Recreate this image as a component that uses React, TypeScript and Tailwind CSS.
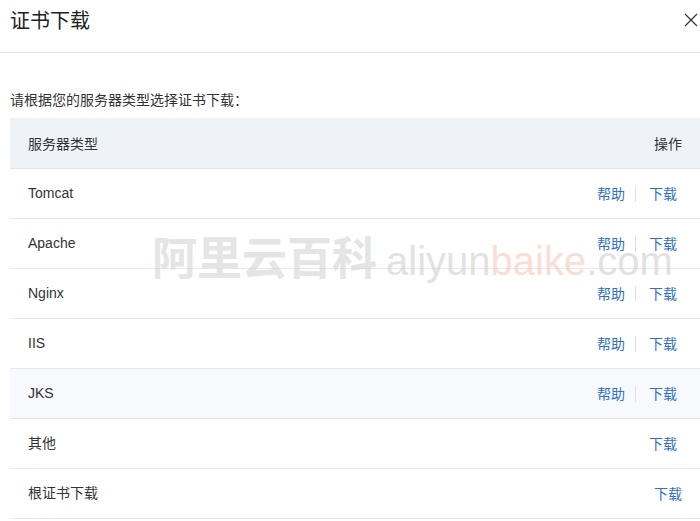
import React from 'react';

const rows = [
  { name: 'Tomcat', help: true },
  { name: 'Apache', help: true },
  { name: 'Nginx', help: true },
  { name: 'IIS', help: true },
  { name: 'JKS', help: true, hover: true },
  { name: '其他', help: false },
  { name: '根证书下载', help: false, last: true },
];

const App: React.FC = () => {
  return (
    <div
      className="relative w-[700px] h-[521px] overflow-hidden bg-white text-[#333]"
      style={{ fontFamily: '"Noto Sans CJK SC", "Liberation Sans", sans-serif' }}
    >
      {/* 标题 */}
      <div className="flex justify-between h-[53px] pt-[6px] pl-[10px] pr-[2px] border-b border-[#e5e5e5]">
        <h2 className="text-[20px] leading-[28px] text-[#222]">证书下载</h2>
        <svg width="14" height="14" viewBox="0 0 14 14" className="mt-[7px]" stroke="#333" strokeWidth="1.2" fill="none">
          <path d="M1 1 L13 13 M13 1 L1 13" />
        </svg>
      </div>

      <p className="mt-[36px] pl-[10px] text-[14px] leading-[20px]">请根据您的服务器类型选择证书下载：</p>

      {/* 表格 */}
      <div className="mt-[9px] ml-[10px] text-[14px]">
        <div className="flex items-center justify-between h-[51px] px-[18px] bg-[#eff3f8] border-b border-[#e3e6ea]">
          <span>服务器类型</span>
          <span>操作</span>
        </div>
        {rows.map((row, index) => (
          <div
            key={index}
            className={
              row.hover
                ? 'flex items-center justify-between h-[50px] px-[18px] bg-[#f7f9fc] border-b border-[#e8e8e8]'
                : 'flex items-center justify-between h-[50px] px-[18px] bg-white border-b border-[#e8e8e8]'
            }
          >
            <span style={{ fontFamily: '"Liberation Sans", "Noto Sans CJK SC", sans-serif' }}>{row.name}</span>
            <div className="flex items-center text-[#2f6fc6]">
              {row.help && (
                <>
                  <span>帮助</span>
                  <span className="w-px h-[16px] bg-[#dcdfe4] ml-[10px] mr-[13px]" />
                </>
              )}
              <span className={row.last ? '' : 'mr-[5px]'}>下载</span>
            </div>
          </div>
        ))}
      </div>

      {/* 水印 */}
      <div className="absolute left-[152px] top-[222px] flex items-baseline pointer-events-none opacity-60 select-none">
        <span
          className="text-[45px] font-bold text-[#d4d4d4]"
          style={{ fontFamily: '"Noto Sans CJK SC", sans-serif' }}
        >
          阿里云百科
        </span>
        <span
          className="ml-[9px] text-[40px] text-[#cfcfcf]"
          style={{ fontFamily: '"Liberation Sans", sans-serif' }}
        >
          aliyun<span className="text-[#f6c9bb]">baike</span>.com
        </span>
      </div>
    </div>
  );
};

export default App;
